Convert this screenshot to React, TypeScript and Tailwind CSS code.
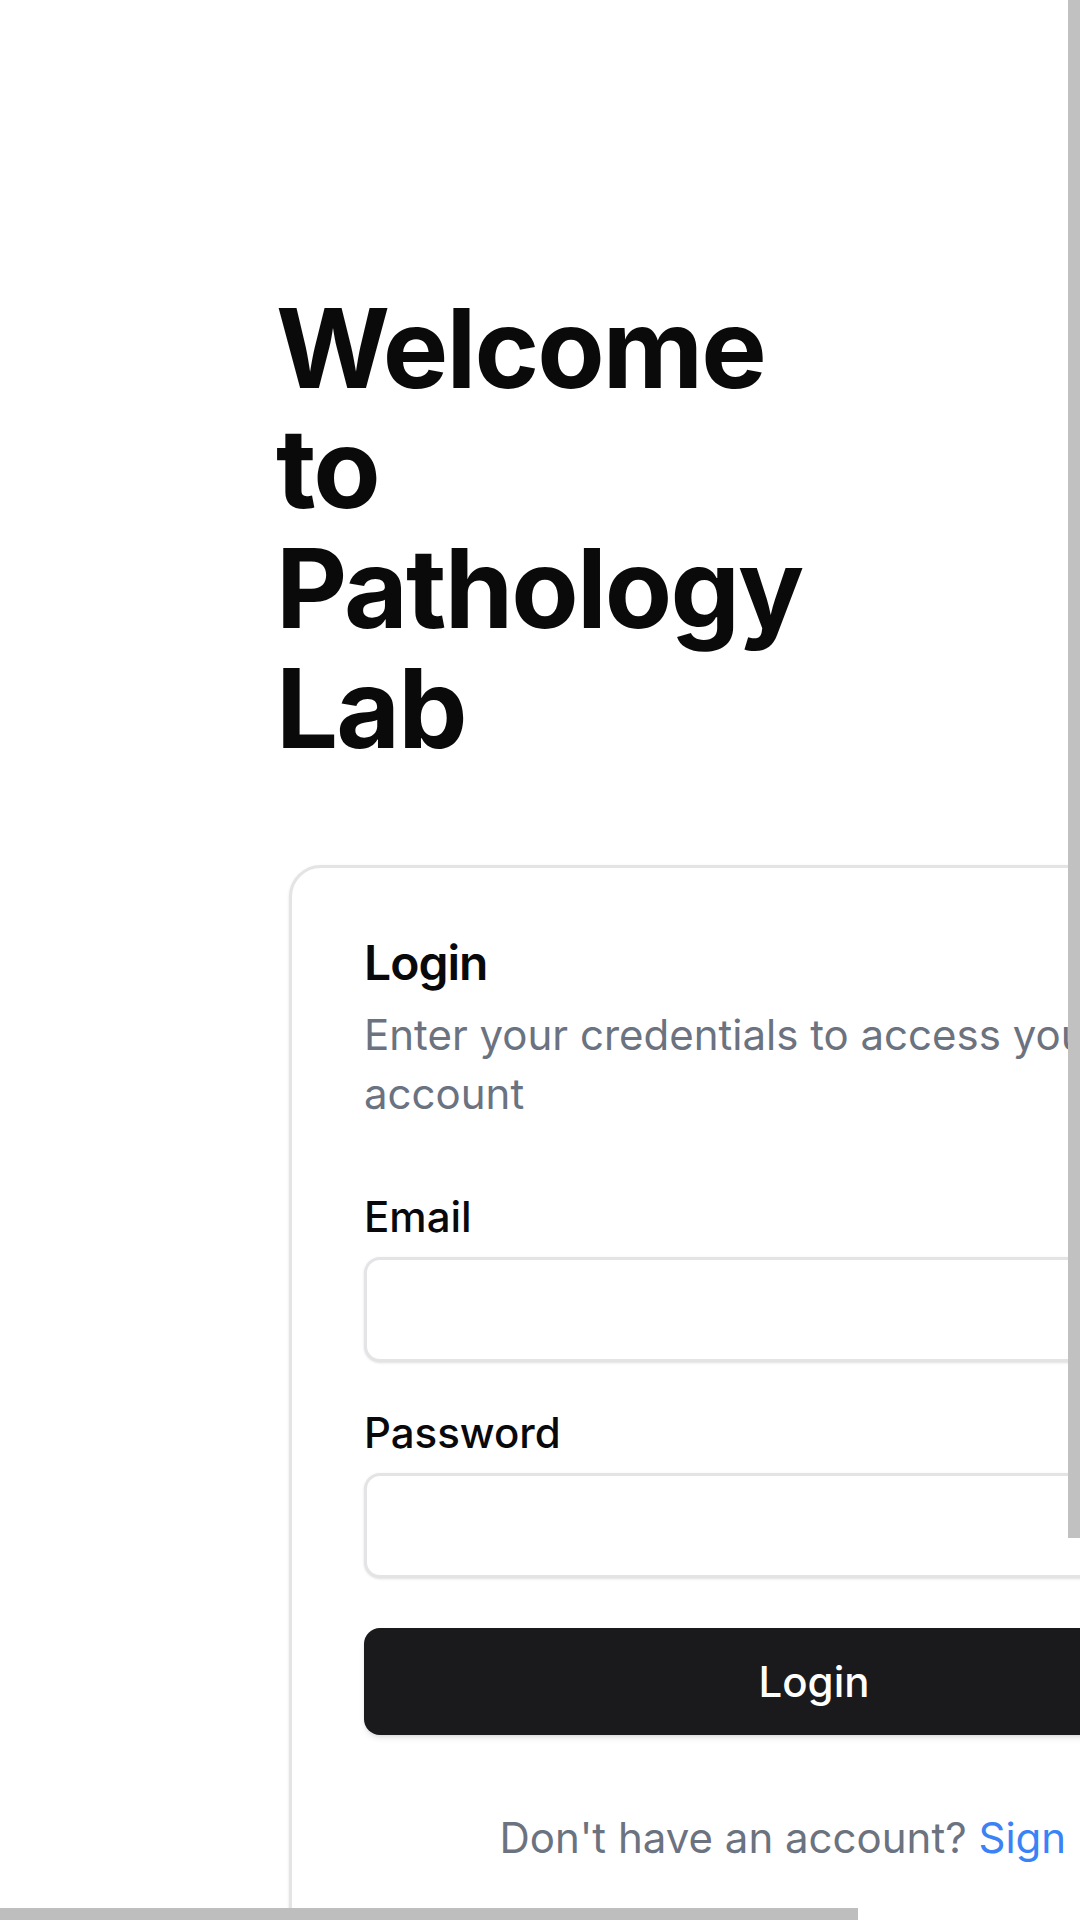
import React from "react";

export default function App() {
  return (
    <div className="relative w-[1080px] h-[1920px] overflow-hidden bg-white font-['Inter',sans-serif] text-[#09090b]">
      <div className="pt-[288px] pl-[276px]">
        <h1 className="text-[110px] leading-[120px] font-bold tracking-[-0.017em] text-[#0a0a0a]">
          <span className="block">Welcome</span>
          <span className="block">to</span>
          <span className="block">Pathology</span>
          <span className="block">Lab</span>
        </h1>
      </div>

      <div className="ml-[289px] mt-[97px] w-[1050px] shrink-0 rounded-[32px] border-[3px] border-[#e4e4e7] bg-white px-[72px] pt-[71px] pb-[72px] shadow-sm">
        <div className="flex flex-col">
          <h2 className="text-[48px] leading-[48px] font-semibold tracking-[-0.02em]">Login</h2>
          <p className="mt-[18px] text-[42px] leading-[59px] text-[#6b7280]">
            Enter your credentials to access your account
          </p>
        </div>

        <form className="mt-[73px] flex flex-col">
          <label className="text-[42px] leading-[42px] font-medium">Email</label>
          <input
            type="email"
            className="mt-[19px] h-[105px] w-full rounded-[16px] border-[3px] border-[#e4e4e7] bg-white px-[32px] text-[42px] shadow-sm outline-none"
          />
          <label className="mt-[50px] text-[42px] leading-[42px] font-medium">Password</label>
          <input
            type="password"
            className="mt-[19px] h-[105px] w-full rounded-[16px] border-[3px] border-[#e4e4e7] bg-white px-[32px] text-[42px] shadow-sm outline-none"
          />
          <button
            type="button"
            className="mt-[50px] h-[107px] w-full rounded-[16px] bg-[#1a1a1c] text-[42px] font-medium text-white shadow-md"
          >
            Login
          </button>
        </form>

        <p className="mt-[73px] text-center text-[42px] leading-[59px] text-[#6b7280]">
          Don't have an account? <a className="text-[#3b82f6]">Sign up</a>
        </p>
      </div>

      <div className="absolute right-0 top-0 h-[1538px] w-[12px] bg-[#c1c1c1]" />
      <div className="absolute bottom-0 left-0 h-[12px] w-[858px] bg-[#bebebe]" />
    </div>
  );
}
